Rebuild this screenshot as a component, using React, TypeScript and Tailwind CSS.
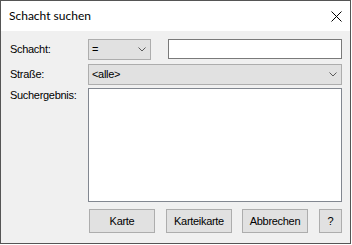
import React from 'react';

const uiFont = { fontFamily: '"Liberation Sans", Arial, sans-serif' };

function Chevron() {
  return (
    <svg width="8" height="5" viewBox="0 0 8 5" className="shrink-0">
      <polyline points="0.5,0.5 4,4 7.5,0.5" fill="none" stroke="#5a5a5a" strokeWidth="1" />
    </svg>
  );
}

function Combo({ value, width }: { value: string; width: string }) {
  return (
    <div className={`${width} h-[21px] flex items-center justify-between bg-[#e1e1e1] border border-[#adadad] pl-[3px] pr-[4px] text-[11px] tracking-[-0.3px] text-black`}>
      <span className="leading-none">{value}</span>
      <Chevron />
    </div>
  );
}

function Btn({ label, width }: { label: string; width: string }) {
  return (
    <button className={`${width} h-[24px] bg-[#e1e1e1] border border-[#adadad] text-[11px] tracking-[-0.3px] text-black flex items-center justify-center`}>
      {label}
    </button>
  );
}

export default function App() {
  return (
    <div className="w-[352px] h-[245px] bg-white">
      <div className="w-[351px] h-[244px] border border-[#555555] flex flex-col">
        {/* title bar */}
        <div className="h-[30px] shrink-0 bg-white flex items-center justify-between pl-[8px] pr-[8px]">
          <span className="text-[12px] text-black" style={{ fontFamily: 'Lato, "Noto Sans", sans-serif' }}>
            Schacht suchen
          </span>
          <svg width="11" height="11" viewBox="0 0 11 11">
            <path d="M0.5 0.5 L10.5 10.5 M10.5 0.5 L0.5 10.5" stroke="#000" strokeWidth="1" />
          </svg>
        </div>

        {/* body */}
        <div className="flex-1 bg-[#f0f0f0] pl-[9px] pr-[8px] pt-[8px] flex flex-col" style={uiFont}>
          <div className="flex items-center h-[21px]">
            <span className="w-[78px] text-[11px] tracking-[-0.3px] text-black">Schacht:</span>
            <Combo value="=" width="w-[63px]" />
            <div className="ml-[17px] w-[174px] h-[20px] self-start bg-white border border-[#7a7a7a]" />
          </div>

          <div className="flex items-center h-[21px] mt-[4px]">
            <span className="w-[78px] text-[11px] tracking-[-0.3px] text-black">Straße:</span>
            <Combo value="<alle>" width="w-[254px]" />
          </div>

          <div className="flex items-start mt-[3px]">
            <span className="w-[78px] text-[11px] tracking-[-0.3px] leading-[14px] text-black">Suchergebnis:</span>
            <div className="w-[254px] h-[114px] bg-white border border-[#828790]" />
          </div>

          <div className="flex ml-[79px] mt-[7px]">
            <Btn label="Karte" width="w-[66px]" />
            <div className="ml-[11px]"><Btn label="Karteikarte" width="w-[66px]" /></div>
            <div className="ml-[10px]"><Btn label="Abbrechen" width="w-[66px]" /></div>
            <div className="ml-[11px]"><Btn label="?" width="w-[23px]" /></div>
          </div>
        </div>
      </div>
    </div>
  );
}
